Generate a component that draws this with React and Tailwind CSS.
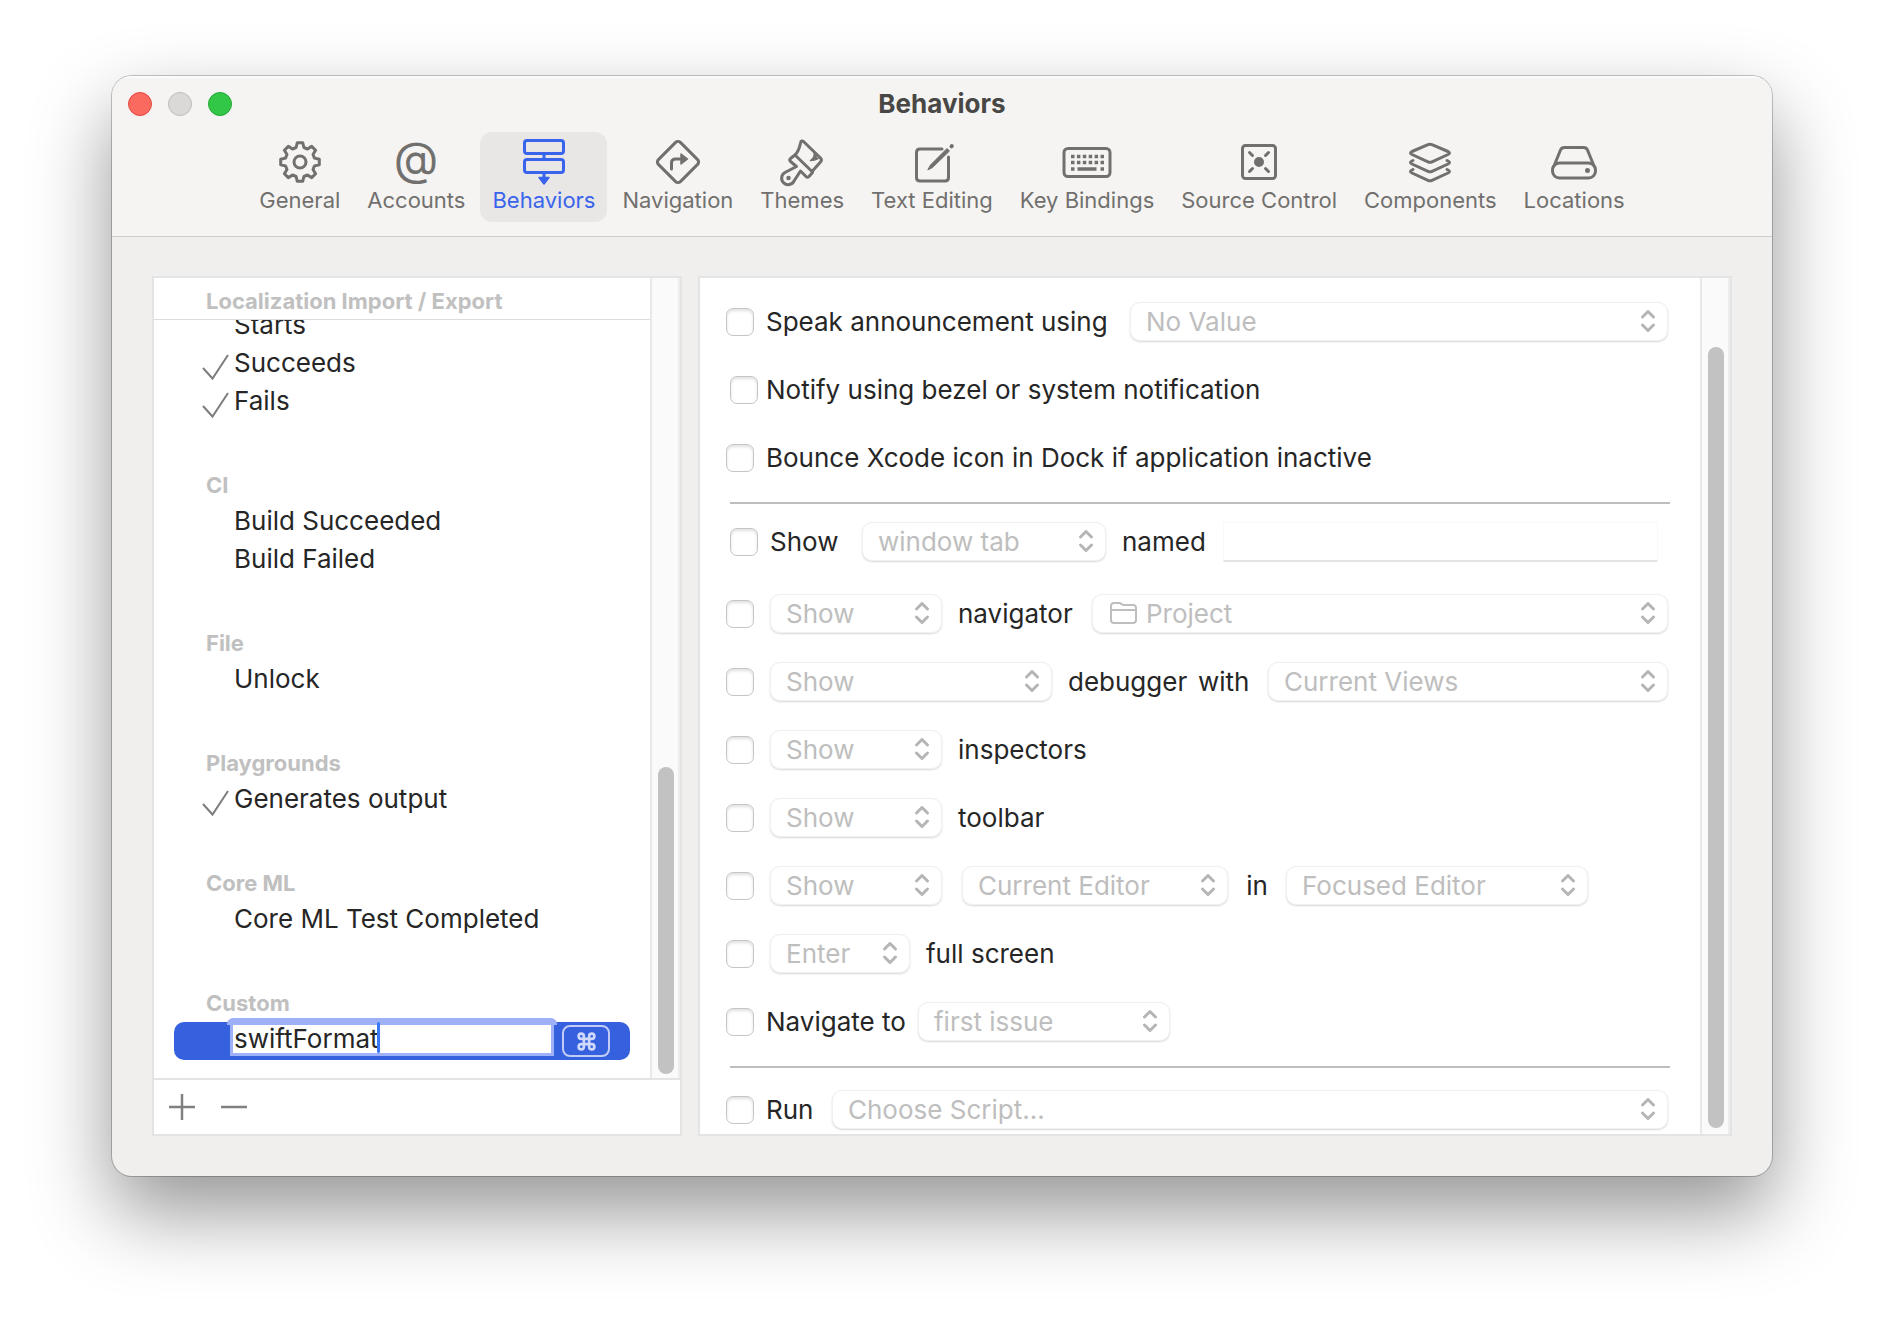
import React from 'react';
import { Command } from 'lucide-react';

// eight-tooth gear outline around 26,24
const gearPoints = Array.from({ length: 8 }).flatMap((_, i) =>
  [[-15, 15], [-8, 19.5], [8, 19.5], [15, 15]].map(([deg, r]) => {
    const a = ((i * 45 + deg - 90) * Math.PI) / 180;
    return `${(26 + r * Math.cos(a)).toFixed(1)},${(24 + r * Math.sin(a)).toFixed(1)}`;
  })
).join(' ');

const icons = {
  General: (
    <>
      <polygon points={gearPoints} />
      <circle cx="26" cy="24" r="6" />
    </>
  ),
  Accounts: (
    <text x="26" y="37" textAnchor="middle" fontSize="46" fontWeight="400" fill="currentColor" stroke="none">@</text>
  ),
  Behaviors: (
    <>
      <rect x="6.5" y="2.5" width="39" height="13" rx="2.5" />
      <rect x="6.5" y="21.5" width="39" height="13" rx="2.5" />
      <path d="M26 16v5M26 35v5" />
      <path d="M21 39.5h10L26 46z" fill="currentColor" strokeWidth="1.5" />
    </>
  ),
  Navigation: (
    <>
      <path d="M23.6 4.4 6.4 21.6a3.4 3.4 0 0 0 0 4.8l17.2 17.2a3.4 3.4 0 0 0 4.8 0l17.2-17.2a3.4 3.4 0 0 0 0-4.8L28.4 4.4a3.4 3.4 0 0 0-4.8 0z" />
      <path d="M19.5 31V25q0-4 4-4H29" />
      <path d="M29 16v10l6.5-5z" fill="currentColor" strokeWidth="1.5" />
    </>
  ),
  Themes: (
    <>
      <path d="M19 17Q23 13 24.5 5q.5-3.5 3.500-1L44.5 20q2 2 0 4L36 33.5" />
      <path d="M19 17l17 16.5M19 17l-4.5 3.5q-1.5 1.5 0 3l6 5L9 34.5A6.5 6.5 0 1 0 18 43l6.5-10 5.5 5.5q1.5 1.5 3 0l3.5-4" />
      <path d="M38 14q1.5 5-3.5 8.5 4 0 7.5-2" fill="currentColor" strokeWidth="1.5" />
      <circle cx="12.5" cy="40" r="1.5" fill="currentColor" strokeWidth="1.5" />
    </>
  ),
  'Text Editing': (
    <>
      <path d="M36 11H14q-3.5 0-3.5 3.5v25q0 3.5 3.5 3.5h25q3.5 0 3.5-3.5V19" />
      <path d="M22 31.5l2.5-4.5L41 10.5l2.5 2.5L26.5 29.5z" fill="currentColor" strokeWidth="1" />
      <path d="M45.5 8.3l.3-.3" strokeWidth="4" />
    </>
  ),
  'Key Bindings': (
    <>
      <rect x="3" y="10.5" width="46" height="28" rx="4" />
      <path d="M10 18.5h33M10 24.5h33" strokeDasharray="3.5 2.4" strokeLinecap="butt" strokeWidth="3.5" />
      <path d="M10 31h3.5M16.5 31h19M39.5 31H43" strokeLinecap="butt" strokeWidth="3.5" />
    </>
  ),
  'Source Control': (
    <>
      <rect x="9.5" y="7.5" width="33" height="33" rx="3" />
      <circle cx="26" cy="24" r="4" fill="currentColor" strokeWidth="2" />
      <path d="M16.5 14.5l3 3M35.5 14.5l-3 3M16.5 33.5l3-3M35.5 33.5l-3-3" />
    </>
  ),
  Components: (
    <>
      <path d="M24 6.7 8 13.5q-3 1.5 0 3l16 7.3q2 1 4 0l16-7.3q3-1.500 0-3L28 6.7q-2-1-4 0z" />
      <path d="M9 22.5l-1 .5q-3 1.5 0 3l16 7.3q2 1 4 0L44 26q3-1.500 0-3l-1-.5" />
      <path d="M9 31.500l-1 .5q-3 1.500 0 3l16 7.300q2 1 4 0L44 35q3-1.500 0-3l-1-.5" />
    </>
  ),
  Locations: (
    <>
      <rect x="4.5" y="25" width="43" height="15" rx="7" />
      <path d="M6 28 12.5 12q1-2.5 4-2.5h19q3 0 4 2.5L46 28" />
      <circle cx="39.5" cy="32.5" r="1.5" fill="currentColor" strokeWidth="2" />
    </>
  ),
};

const groups = [
  {
    name: '',
    items: [
      { label: 'Starts' },
      { label: 'Succeeds', checked: true },
      { label: 'Fails', checked: true },
    ],
  },
  { name: 'CI', items: [{ label: 'Build Succeeded' }, { label: 'Build Failed' }] },
  { name: 'File', items: [{ label: 'Unlock' }] },
  { name: 'Playgrounds', items: [{ label: 'Generates output', checked: true }] },
  { name: 'Core ML', items: [{ label: 'Core ML Test Completed' }] },
];

const ToolbarItem = ({ name, active }) => (
  <button
    className={`flex flex-col items-center rounded-xl px-3 pt-1.5 h-[90px] text-[22px] leading-7 whitespace-nowrap ${
      active ? 'bg-[#e8e7e5] text-[#3a64ec]' : 'text-[#71706e]'
    }`}
  >
    <svg className="overflow-visible" width="52" height="48" viewBox="0 0 52 48" fill="none" stroke="currentColor" strokeWidth="3" strokeLinecap="round" strokeLinejoin="round" aria-hidden="true">
      {icons[name]}
    </svg>
    {name}
  </button>
);

const GroupTitle = ({ children }) => (
  <h2 className="h-11 pl-[52px] text-[22px] leading-[50px] font-bold text-[#c0c0c0]">{children}</h2>
);

const ListItem = ({ label, checked }) => (
  <li className="flex items-center h-[38px] pl-12 pb-1">
    <span className="w-8 shrink-0 pt-2">
      {checked && (
        <svg width="28" height="28" viewBox="0 0 28 28" fill="none" stroke="#7d7d7d" strokeWidth="2" aria-hidden="true">
          <path d="M1 15 10.5 25.5 26 2" />
        </svg>
      )}
    </span>
    {label}
  </li>
);

const Scrollbar = ({ className }) => (
  <div className={`flex w-[30px] shrink-0 justify-center border-l-2 border-r-2 pl-0.5 border-l-[#e8e8e8] border-r-[#ededed] bg-[#fafafa] ${className}`}>
    <div className="w-4 rounded-full bg-[#c2c2c2]"></div>
  </div>
);

const Check = ({ id, label, className = '' }) => (
  <input
    id={id}
    type="checkbox"
    aria-label={label}
    className={`appearance-none shrink-0 size-7 rounded-[7px] border border-[#c6c6c6] bg-white shadow-[inset_0_2px_3px_rgba(0,0,0,0.12)] ${className}`}
  />
);

const Popup = ({ value, label, className, icon }) => (
  <div className={`relative shrink-0 h-[39px] mb-px ${className}`}>
    <select
      disabled
      aria-label={label}
      className={`appearance-none w-full h-full pb-1 rounded-[10px] border border-[#f0f0f0] bg-white text-[#bebebe] opacity-100 shadow-[0_1px_2px_rgba(0,0,0,0.16)] ${
        icon ? 'pl-[53px]' : 'pl-[15px]'
      }`}
    >
      <option>{value}</option>
    </select>
    {icon && (
      <svg className="absolute left-4 top-[7px]" width="30" height="24" viewBox="0 0 30 24" fill="none" stroke="#bebebe" strokeWidth="2" strokeLinejoin="round" aria-hidden="true">
        <path d="M3 5q0-3 3-3h5q1.5 0 2.5 1t2.5 1h9q3 0 3 3v12q0 3-3 3H6q-3 0-3-3zM3 9h25" />
      </svg>
    )}
    <svg className="absolute right-3 top-[7px]" width="16" height="24" viewBox="0 0 16 24" fill="none" stroke="#b5b5b5" strokeWidth="3" strokeLinecap="round" strokeLinejoin="round" aria-hidden="true">
      <path d="M2.5 8 8 2.5 13.5 8M2.5 16 8 21.5 13.5 16" />
    </svg>
  </div>
);

const Row = ({ children, className = 'h-[68px]' }) => (
  <div className={`flex items-center pl-[26px] pr-8 ${className}`}>{children}</div>
);

const Divider = () => <hr className="mt-2.5 mx-[30px] border-0 h-0.5 bg-[#bdbdbd]" />;

const Sidebar = () => (
  <aside className="flex flex-col w-[530px] shrink-0 border-2 border-[#e4e4e4] bg-white">
    <div className="flex flex-1">
      <div className="flex-1 min-w-0">
        <div className="h-[42px] border-b border-[#dcdcdc]">
          <h2 className="pl-[52px] text-[22px] leading-[46px] font-bold text-[#c0c0c0]">Localization Import / Export</h2>
        </div>
        {/* the list is scrolled, its first row slides under the group title */}
        <div className="overflow-hidden pb-[18px]">
          <div className="-mt-3">
            {groups.map((group) => (
              <section key={group.name} className="pb-[38px]">
                {group.name && <GroupTitle>{group.name}</GroupTitle>}
                <ul>
                  {group.items.map((item) => (
                    <ListItem key={item.label} {...item} />
                  ))}
                </ul>
              </section>
            ))}
            <GroupTitle>Custom</GroupTitle>
            <div className="mx-5 flex items-center h-[38px] rounded-[10px] bg-[#3560de] pl-14">
              <div className="relative w-[324px] h-[38px] pb-1">
                <span className="absolute -inset-x-[3px] -top-1 h-[7px] rounded-t-md bg-[#9db0f8]"></span>
                <input
                  type="text"
                  aria-label="Behavior name"
                  defaultValue="swiftFormat"
                  className="relative block w-full h-[34px] border-[3px] border-[#9db0f8] bg-white pl-px outline-none"
                />
                <span className="absolute left-[147px] top-0 w-[3px] h-[31px] rounded-sm bg-[#3a78f8]"></span>
              </div>
              <button aria-label="Set shortcut" className="ml-2 flex items-center justify-center w-12 h-8 rounded-lg border-2 border-[#c0ccf6] text-[#d0d9fa]">
                <Command size={21} strokeWidth={3} />
              </button>
            </div>
          </div>
        </div>
      </div>
      <Scrollbar className="pt-[489px] pb-1" />
    </div>
    <div className="flex items-center h-14 border-t-2 border-[#e4e4e4] pl-3.5 gap-6">
      <button aria-label="Add behavior">
        <svg width="28" height="28" viewBox="0 0 28 28" stroke="#808080" strokeWidth="2.5" aria-hidden="true">
          <path d="M1 14h26M14 1v26" />
        </svg>
      </button>
      <button aria-label="Remove behavior">
        <svg width="28" height="28" viewBox="0 0 28 28" stroke="#808080" strokeWidth="2.5" aria-hidden="true">
          <path d="M1 14h26" />
        </svg>
      </button>
    </div>
  </aside>
);

const Actions = () => (
  <section className="flex flex-1 min-w-0 border-2 border-[#e4e4e4] bg-white">
    <div className="flex-1 min-w-0 pt-2.5 pb-1">
      <Row>
        <Check id="speak" />
        <label htmlFor="speak" className="pl-3 w-[376px] shrink-0">Speak announcement using</label>
        <Popup label="Voice" value="No Value" className="grow" />
      </Row>
      <Row>
        <Check id="notify" className="ml-1" />
        <label htmlFor="notify" className="pl-2">Notify using bezel or system notification</label>
      </Row>
      <Row>
        <Check id="bounce" />
        <label htmlFor="bounce" className="pl-3">Bounce Xcode icon in Dock if application inactive</label>
      </Row>
      <Divider />
      <Row className="h-[76px]">
        <Check id="show-tab" className="ml-1" />
        <label htmlFor="show-tab" className="pl-3 w-[104px]">Show</label>
        <Popup label="Window kind" value="window tab" className="w-[244px]" />
        <label htmlFor="tab-name" className="pl-4 w-[117px]">named</label>
        <input id="tab-name" type="text" disabled className="flex-1 min-w-0 h-10 mr-2.5 border border-[#f9f9f9] border-b-2 border-b-[#e4e4e4] bg-white" />
      </Row>
      <Row>
        <Check label="Navigator" />
        <Popup label="Navigator visibility" value="Show" className="ml-4 w-[172px]" />
        <span className="pl-4 w-[150px]">navigator</span>
        <Popup label="Navigator" value="Project" icon className="grow" />
      </Row>
      <Row>
        <Check label="Debugger" />
        <Popup label="Debugger visibility" value="Show" className="ml-4 w-[282px]" />
        <span className="pl-4 w-[146px]">debugger</span>
        <span className="w-[70px]">with</span>
        <Popup label="Debugger views" value="Current Views" className="grow" />
      </Row>
      <Row>
        <Check label="Inspectors" />
        <Popup label="Inspectors visibility" value="Show" className="ml-4 w-[172px]" />
        <span className="pl-4">inspectors</span>
      </Row>
      <Row>
        <Check label="Toolbar" />
        <Popup label="Toolbar visibility" value="Show" className="ml-4 w-[172px]" />
        <span className="pl-4">toolbar</span>
      </Row>
      <Row>
        <Check label="Editor" />
        <Popup label="Editor visibility" value="Show" className="ml-4 w-[172px]" />
        <Popup label="Editor" value="Current Editor" className="ml-5 w-[266px]" />
        <span className="w-[58px] text-center">in</span>
        <Popup label="Editor target" value="Focused Editor" className="w-[302px]" />
      </Row>
      <Row>
        <Check label="Full screen" />
        <Popup label="Full screen mode" value="Enter" className="ml-4 w-[140px]" />
        <span className="pl-4">full screen</span>
      </Row>
      <Row>
        <Check id="navigate" />
        <label htmlFor="navigate" className="pl-3 w-[164px]">Navigate to</label>
        <Popup label="Issue" value="first issue" className="w-[252px]" />
      </Row>
      <Divider />
      <Row className="h-10 mt-[22px]">
        <Check id="run" />
        <label htmlFor="run" className="pl-3 w-[78px]">Run</label>
        <Popup label="Script" value="Choose Script..." className="grow" />
      </Row>
    </div>
    <Scrollbar className="pt-[69px] pb-1.5" />
  </section>
);

const App = () => {
  return (
    <div className="min-h-screen bg-white px-28 pt-[76px] pb-[148px] font-['Inter',sans-serif] text-[26px] leading-[38px] text-[#262626]">
      <main className="rounded-[20px] overflow-hidden bg-[#f0efed] shadow-[0_0_0_1px_rgba(0,0,0,0.22),0_36px_80px_rgba(0,0,0,0.42)]">
        <header className="relative h-[161px] border-b border-[#cfcecc] bg-[#f5f4f2] shadow-[inset_0_2px_0_#fbfbfa]">
          <div className="absolute left-4 top-4 flex gap-4">
            <button aria-label="Close" className="size-6 rounded-full border border-[#e1493f] bg-[#fb6a5e]"></button>
            <button aria-label="Minimize" className="size-6 rounded-full border border-[#bdbcba] bg-[#dad9d7]"></button>
            <button aria-label="Zoom" className="size-6 rounded-full border border-[#20a834] bg-[#33c748]"></button>
          </div>
          <h1 className="text-center font-bold leading-[56px] text-[#484745]">Behaviors</h1>
          <nav className="flex justify-center gap-[3px]">
            {Object.keys(icons).map((name) => (
              <ToolbarItem key={name} name={name} active={name === 'Behaviors'} />
            ))}
          </nav>
        </header>
        <div className="flex gap-4 px-10 pt-[39px] pb-10">
          <Sidebar />
          <Actions />
        </div>
      </main>
    </div>
  );
};

export default App;
